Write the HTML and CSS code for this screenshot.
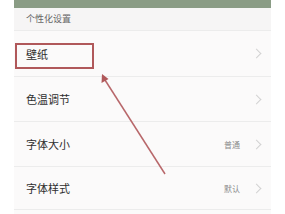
FILE: index.html
```html
<!DOCTYPE html>
<html lang="zh">
<head>
<meta charset="utf-8">
<link rel="stylesheet" href="styles.css">
</head>
<body>
<div class="page">
  <div class="panel">
    <div class="topband"></div>
    <div class="section">个性化设置</div>
    <div class="row r1"><span class="label">壁纸</span><span class="right"><span class="chev"></span></span></div>
    <div class="row r2"><span class="label">色温调节</span><span class="right"><span class="chev"></span></span></div>
    <div class="row r3"><span class="label">字体大小</span><span class="right"><span class="value">普通</span><span class="chev"></span></span></div>
    <div class="row r4"><span class="label">字体样式</span><span class="right"><span class="value">默认</span><span class="chev"></span></span></div>
  </div>
  <svg class="annot" width="285" height="214" viewBox="0 0 285 214">
    <rect x="16" y="44" width="77" height="24" fill="none" stroke="#b0585a" stroke-width="2"/>
    <line x1="165" y1="174" x2="105" y2="80" stroke="#b8676a" stroke-width="1.5"/>
    <polygon points="102,74 101.5,83 108.5,79" fill="#b0585a"/>
  </svg>
</div>
</body>
</html>
```
FILE: styles.css
```css
html, body {
  margin: 0;
  padding: 0;
  background: #ffffff;
}
.page {
  position: relative;
  width: 285px;
  height: 214px;
  overflow: hidden;
  font-family: "Noto Sans CJK SC", "Noto Sans", sans-serif;
}
.panel {
  margin: 0 14px;
  background: #fbfafa;
  height: 214px;
}
.topband {
  height: 8px;
  background: #8a9c85;
}
.section {
  height: 22px;
  padding-left: 12px;
  font-size: 9px;
  line-height: 22px;
  color: #666;
  background: #f6f5f5;
  border-bottom: 1px solid #ececec;
}
.row {
  display: flex;
  align-items: center;
  justify-content: space-between;
  padding: 0 11px 0 12px;
  border-bottom: 1px solid #ececec;
  box-sizing: border-box;
}
.r1 { height: 46px; }
.r2 { height: 45px; }
.r3 { height: 45px; }
.r4 { height: 43px; }
.label {
  font-size: 11px;
  color: #2e2e2e;
}
.right {
  display: flex;
  align-items: center;
  gap: 13px;
}
.value {
  font-size: 8px;
  color: #8a8a8a;
}
.chev {
  width: 6px;
  height: 6px;
  border-top: 1px solid #d2d2d2;
  border-right: 1px solid #d2d2d2;
  transform: rotate(45deg);
}
.annot {
  position: absolute;
  left: 0;
  top: 0;
}
```
